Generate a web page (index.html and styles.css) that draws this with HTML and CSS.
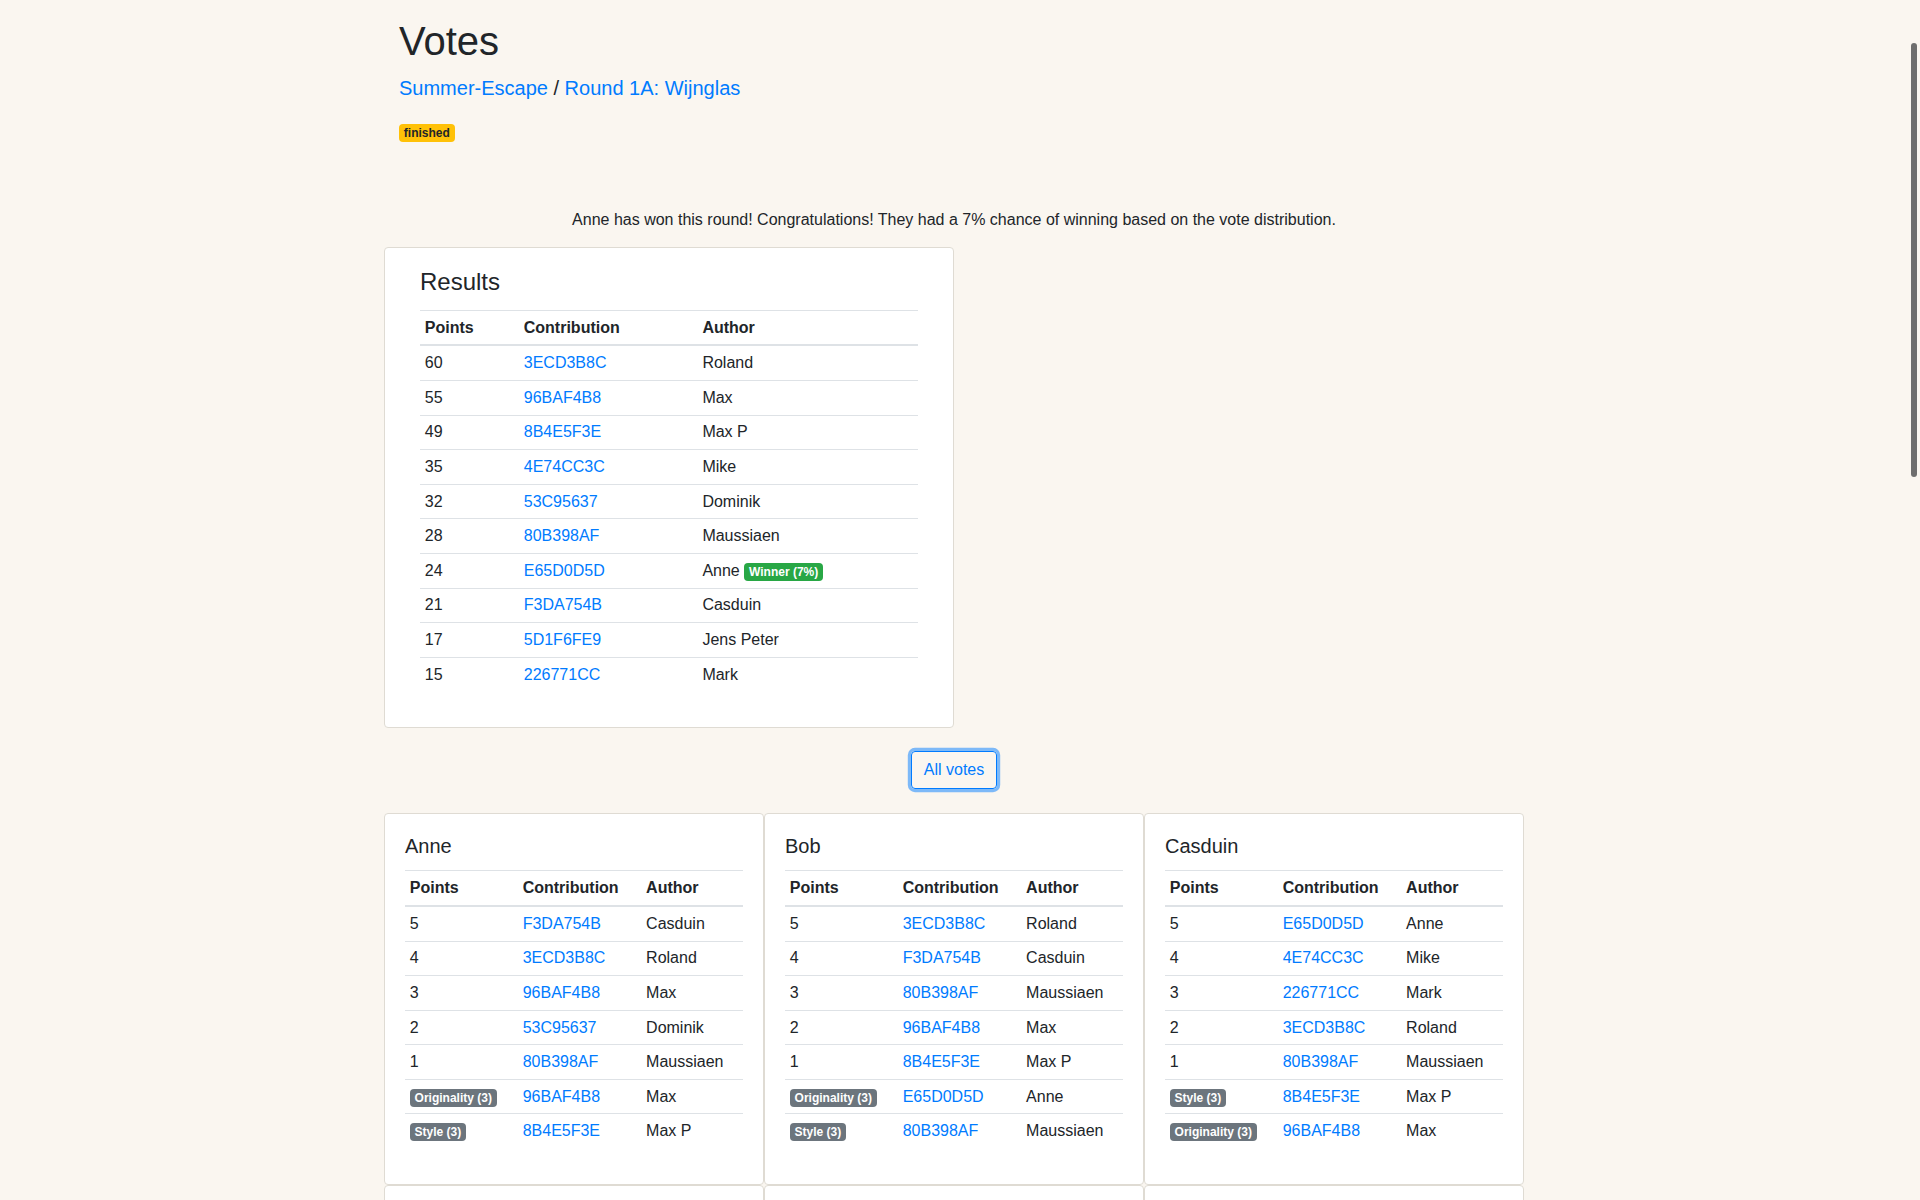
FILE: index.html
```html
<!DOCTYPE html>
<html lang="en">
<head>
<meta charset="utf-8">
<title>Votes</title>
<link rel="stylesheet" href="styles.css">
</head>
<body>
<div class="scroll-thumb" aria-hidden="true"></div>
<div class="container">
  <header class="page-header">
    <h1 class="title">Votes</h1>
    <div class="crumbs"><a href="#">Summer-Escape</a> / <a href="#">Round 1A: Wijnglas</a></div>
    <div class="status"><span class="badge badge-warning">finished</span></div>
  </header>

  <p class="message">Anne has won this round! Congratulations! They had a 7% chance of winning based on the vote distribution.</p>

  <section class="card results">
    <div class="results-body">
      <h4 class="card-title-lg">Results</h4>
      <table class="table">
        <thead><tr><th>Points</th><th>Contribution</th><th>Author</th></tr></thead>
        <tbody>
          <tr><td>60</td><td><a href="#">3ECD3B8C</a></td><td>Roland</td></tr>
          <tr><td>55</td><td><a href="#">96BAF4B8</a></td><td>Max</td></tr>
          <tr><td>49</td><td><a href="#">8B4E5F3E</a></td><td>Max P</td></tr>
          <tr><td>35</td><td><a href="#">4E74CC3C</a></td><td>Mike</td></tr>
          <tr><td>32</td><td><a href="#">53C95637</a></td><td>Dominik</td></tr>
          <tr><td>28</td><td><a href="#">80B398AF</a></td><td>Maussiaen</td></tr>
          <tr><td>24</td><td><a href="#">E65D0D5D</a></td><td>Anne <span class="badge badge-success">Winner (7%)</span></td></tr>
          <tr><td>21</td><td><a href="#">F3DA754B</a></td><td>Casduin</td></tr>
          <tr><td>17</td><td><a href="#">5D1F6FE9</a></td><td>Jens Peter</td></tr>
          <tr><td>15</td><td><a href="#">226771CC</a></td><td>Mark</td></tr>
        </tbody>
      </table>
    </div>
  </section>

  <div class="actions"><button class="btn btn-outline" type="button">All votes</button></div>

  <div class="votes">
    <section class="card vote">
      <h5 class="card-title">Anne</h5>
      <table class="table">
        <thead><tr><th>Points</th><th>Contribution</th><th>Author</th></tr></thead>
        <tbody>
          <tr><td>5</td><td><a href="#">F3DA754B</a></td><td>Casduin</td></tr>
          <tr><td>4</td><td><a href="#">3ECD3B8C</a></td><td>Roland</td></tr>
          <tr><td>3</td><td><a href="#">96BAF4B8</a></td><td>Max</td></tr>
          <tr><td>2</td><td><a href="#">53C95637</a></td><td>Dominik</td></tr>
          <tr><td>1</td><td><a href="#">80B398AF</a></td><td>Maussiaen</td></tr>
          <tr><td><span class="badge badge-secondary">Originality (3)</span></td><td><a href="#">96BAF4B8</a></td><td>Max</td></tr>
          <tr><td><span class="badge badge-secondary">Style (3)</span></td><td><a href="#">8B4E5F3E</a></td><td>Max P</td></tr>
        </tbody>
      </table>
    </section>
    <section class="card vote">
      <h5 class="card-title">Bob</h5>
      <table class="table">
        <thead><tr><th>Points</th><th>Contribution</th><th>Author</th></tr></thead>
        <tbody>
          <tr><td>5</td><td><a href="#">3ECD3B8C</a></td><td>Roland</td></tr>
          <tr><td>4</td><td><a href="#">F3DA754B</a></td><td>Casduin</td></tr>
          <tr><td>3</td><td><a href="#">80B398AF</a></td><td>Maussiaen</td></tr>
          <tr><td>2</td><td><a href="#">96BAF4B8</a></td><td>Max</td></tr>
          <tr><td>1</td><td><a href="#">8B4E5F3E</a></td><td>Max P</td></tr>
          <tr><td><span class="badge badge-secondary">Originality (3)</span></td><td><a href="#">E65D0D5D</a></td><td>Anne</td></tr>
          <tr><td><span class="badge badge-secondary">Style (3)</span></td><td><a href="#">80B398AF</a></td><td>Maussiaen</td></tr>
        </tbody>
      </table>
    </section>
    <section class="card vote">
      <h5 class="card-title">Casduin</h5>
      <table class="table">
        <thead><tr><th>Points</th><th>Contribution</th><th>Author</th></tr></thead>
        <tbody>
          <tr><td>5</td><td><a href="#">E65D0D5D</a></td><td>Anne</td></tr>
          <tr><td>4</td><td><a href="#">4E74CC3C</a></td><td>Mike</td></tr>
          <tr><td>3</td><td><a href="#">226771CC</a></td><td>Mark</td></tr>
          <tr><td>2</td><td><a href="#">3ECD3B8C</a></td><td>Roland</td></tr>
          <tr><td>1</td><td><a href="#">80B398AF</a></td><td>Maussiaen</td></tr>
          <tr><td><span class="badge badge-secondary">Style (3)</span></td><td><a href="#">8B4E5F3E</a></td><td>Max P</td></tr>
          <tr><td><span class="badge badge-secondary">Originality (3)</span></td><td><a href="#">96BAF4B8</a></td><td>Max</td></tr>
        </tbody>
      </table>
    </section>
    <section class="card vote">
      <h5 class="card-title">Dominik</h5>
      <table class="table">
        <thead><tr><th>Points</th><th>Contribution</th><th>Author</th></tr></thead>
        <tbody>
          <tr><td>5</td><td><a href="#">96BAF4B8</a></td><td>Max</td></tr>
          <tr><td>4</td><td><a href="#">3ECD3B8C</a></td><td>Roland</td></tr>
          <tr><td>3</td><td><a href="#">8B4E5F3E</a></td><td>Max P</td></tr>
          <tr><td>2</td><td><a href="#">4E74CC3C</a></td><td>Mike</td></tr>
          <tr><td>1</td><td><a href="#">5D1F6FE9</a></td><td>Jens Peter</td></tr>
          <tr><td><span class="badge badge-secondary">Originality (3)</span></td><td><a href="#">3ECD3B8C</a></td><td>Roland</td></tr>
          <tr><td><span class="badge badge-secondary">Style (3)</span></td><td><a href="#">96BAF4B8</a></td><td>Max</td></tr>
        </tbody>
      </table>
    </section>
    <section class="card vote">
      <h5 class="card-title">Jens Peter</h5>
      <table class="table">
        <thead><tr><th>Points</th><th>Contribution</th><th>Author</th></tr></thead>
        <tbody>
          <tr><td>5</td><td><a href="#">8B4E5F3E</a></td><td>Max P</td></tr>
          <tr><td>4</td><td><a href="#">96BAF4B8</a></td><td>Max</td></tr>
          <tr><td>3</td><td><a href="#">3ECD3B8C</a></td><td>Roland</td></tr>
          <tr><td>2</td><td><a href="#">53C95637</a></td><td>Dominik</td></tr>
          <tr><td>1</td><td><a href="#">E65D0D5D</a></td><td>Anne</td></tr>
          <tr><td><span class="badge badge-secondary">Style (3)</span></td><td><a href="#">4E74CC3C</a></td><td>Mike</td></tr>
          <tr><td><span class="badge badge-secondary">Originality (3)</span></td><td><a href="#">8B4E5F3E</a></td><td>Max P</td></tr>
        </tbody>
      </table>
    </section>
    <section class="card vote">
      <h5 class="card-title">Mark</h5>
      <table class="table">
        <thead><tr><th>Points</th><th>Contribution</th><th>Author</th></tr></thead>
        <tbody>
          <tr><td>5</td><td><a href="#">3ECD3B8C</a></td><td>Roland</td></tr>
          <tr><td>4</td><td><a href="#">8B4E5F3E</a></td><td>Max P</td></tr>
          <tr><td>3</td><td><a href="#">4E74CC3C</a></td><td>Mike</td></tr>
          <tr><td>2</td><td><a href="#">96BAF4B8</a></td><td>Max</td></tr>
          <tr><td>1</td><td><a href="#">F3DA754B</a></td><td>Casduin</td></tr>
          <tr><td><span class="badge badge-secondary">Originality (3)</span></td><td><a href="#">53C95637</a></td><td>Dominik</td></tr>
          <tr><td><span class="badge badge-secondary">Style (3)</span></td><td><a href="#">3ECD3B8C</a></td><td>Roland</td></tr>
        </tbody>
      </table>
    </section>
    <section class="card vote">
      <h5 class="card-title">Maussiaen</h5>
      <table class="table">
        <thead><tr><th>Points</th><th>Contribution</th><th>Author</th></tr></thead>
        <tbody>
          <tr><td>5</td><td><a href="#">96BAF4B8</a></td><td>Max</td></tr>
          <tr><td>4</td><td><a href="#">8B4E5F3E</a></td><td>Max P</td></tr>
          <tr><td>3</td><td><a href="#">3ECD3B8C</a></td><td>Roland</td></tr>
          <tr><td>2</td><td><a href="#">E65D0D5D</a></td><td>Anne</td></tr>
          <tr><td>1</td><td><a href="#">226771CC</a></td><td>Mark</td></tr>
          <tr><td><span class="badge badge-secondary">Originality (3)</span></td><td><a href="#">4E74CC3C</a></td><td>Mike</td></tr>
          <tr><td><span class="badge badge-secondary">Style (3)</span></td><td><a href="#">53C95637</a></td><td>Dominik</td></tr>
        </tbody>
      </table>
    </section>
    <section class="card vote">
      <h5 class="card-title">Max</h5>
      <table class="table">
        <thead><tr><th>Points</th><th>Contribution</th><th>Author</th></tr></thead>
        <tbody>
          <tr><td>5</td><td><a href="#">3ECD3B8C</a></td><td>Roland</td></tr>
          <tr><td>4</td><td><a href="#">4E74CC3C</a></td><td>Mike</td></tr>
          <tr><td>3</td><td><a href="#">53C95637</a></td><td>Dominik</td></tr>
          <tr><td>2</td><td><a href="#">8B4E5F3E</a></td><td>Max P</td></tr>
          <tr><td>1</td><td><a href="#">5D1F6FE9</a></td><td>Jens Peter</td></tr>
          <tr><td><span class="badge badge-secondary">Style (3)</span></td><td><a href="#">3ECD3B8C</a></td><td>Roland</td></tr>
          <tr><td><span class="badge badge-secondary">Originality (3)</span></td><td><a href="#">F3DA754B</a></td><td>Casduin</td></tr>
        </tbody>
      </table>
    </section>
    <section class="card vote">
      <h5 class="card-title">Max P</h5>
      <table class="table">
        <thead><tr><th>Points</th><th>Contribution</th><th>Author</th></tr></thead>
        <tbody>
          <tr><td>5</td><td><a href="#">96BAF4B8</a></td><td>Max</td></tr>
          <tr><td>4</td><td><a href="#">3ECD3B8C</a></td><td>Roland</td></tr>
          <tr><td>3</td><td><a href="#">80B398AF</a></td><td>Maussiaen</td></tr>
          <tr><td>2</td><td><a href="#">4E74CC3C</a></td><td>Mike</td></tr>
          <tr><td>1</td><td><a href="#">53C95637</a></td><td>Dominik</td></tr>
          <tr><td><span class="badge badge-secondary">Originality (3)</span></td><td><a href="#">96BAF4B8</a></td><td>Max</td></tr>
          <tr><td><span class="badge badge-secondary">Style (3)</span></td><td><a href="#">4E74CC3C</a></td><td>Mike</td></tr>
        </tbody>
      </table>
    </section>
    <section class="card vote">
      <h5 class="card-title">Mike</h5>
      <table class="table">
        <thead><tr><th>Points</th><th>Contribution</th><th>Author</th></tr></thead>
        <tbody>
          <tr><td>5</td><td><a href="#">8B4E5F3E</a></td><td>Max P</td></tr>
          <tr><td>4</td><td><a href="#">96BAF4B8</a></td><td>Max</td></tr>
          <tr><td>3</td><td><a href="#">3ECD3B8C</a></td><td>Roland</td></tr>
          <tr><td>2</td><td><a href="#">80B398AF</a></td><td>Maussiaen</td></tr>
          <tr><td>1</td><td><a href="#">53C95637</a></td><td>Dominik</td></tr>
          <tr><td><span class="badge badge-secondary">Style (3)</span></td><td><a href="#">8B4E5F3E</a></td><td>Max P</td></tr>
          <tr><td><span class="badge badge-secondary">Originality (3)</span></td><td><a href="#">E65D0D5D</a></td><td>Anne</td></tr>
        </tbody>
      </table>
    </section>
    <section class="card vote">
      <h5 class="card-title">Roland</h5>
      <table class="table">
        <thead><tr><th>Points</th><th>Contribution</th><th>Author</th></tr></thead>
        <tbody>
          <tr><td>5</td><td><a href="#">96BAF4B8</a></td><td>Max</td></tr>
          <tr><td>4</td><td><a href="#">8B4E5F3E</a></td><td>Max P</td></tr>
          <tr><td>3</td><td><a href="#">4E74CC3C</a></td><td>Mike</td></tr>
          <tr><td>2</td><td><a href="#">226771CC</a></td><td>Mark</td></tr>
          <tr><td>1</td><td><a href="#">F3DA754B</a></td><td>Casduin</td></tr>
          <tr><td><span class="badge badge-secondary">Originality (3)</span></td><td><a href="#">5D1F6FE9</a></td><td>Jens Peter</td></tr>
          <tr><td><span class="badge badge-secondary">Style (3)</span></td><td><a href="#">96BAF4B8</a></td><td>Max</td></tr>
        </tbody>
      </table>
    </section>
  </div>
</div>
</body>
</html>
```
FILE: styles.css
```css
body {
  margin: 0;
  padding-right: 12px;
  background: #faf6f0;
  color: #212529;
  font-family: "Liberation Sans", Arial, sans-serif;
  font-size: 16px;
  line-height: 1.5;
}
.scroll-thumb {
  position: fixed;
  top: 43px;
  right: 3px;
  width: 6px;
  height: 434px;
  border-radius: 3px;
  background: #6e6e6e;
}
a {
  color: #007bff;
  text-decoration: none;
}
.container {
  max-width: 1140px;
  margin: 0 auto;
  padding-bottom: 60px;
}
.page-header {
  padding: 17px 15px 0;
}
.title {
  margin: 0 0 11px;
  font-size: 40px;
  font-weight: 500;
  line-height: 1.2;
}
.crumbs {
  font-size: 20px;
  line-height: 1.2;
  margin-bottom: 24px;
}
.status {
  line-height: 1;
}
.badge {
  display: inline-block;
  padding: 3px 4.8px;
  font-size: 12px;
  font-weight: 700;
  line-height: 1;
  white-space: nowrap;
  vertical-align: baseline;
  border-radius: 4px;
}
.badge-warning {
  background: #ffc107;
  color: #212529;
}
.badge-success {
  background: #28a745;
  color: #fff;
}
.badge-secondary {
  background: #6c757d;
  color: #fff;
}
.message {
  text-align: center;
  margin: 66px 0 15px;
}
.card {
  background: #fff;
  border: 1px solid #dfdbd3;
  border-radius: 4px;
}
.results {
  width: 570px;
  box-sizing: border-box;
}
.results-body {
  padding: 20px 35px;
}
.card-title-lg {
  margin: 0 0 13px;
  font-size: 24px;
  font-weight: 500;
  line-height: 1.2;
}
.table {
  width: 100%;
  border-collapse: collapse;
  margin-bottom: 16px;
}
.table th,
.table td {
  padding: 4.8px;
  text-align: left;
  vertical-align: top;
  border-top: 1px solid #dee2e6;
}
.table th {
  font-weight: 700;
}
.table thead th {
  vertical-align: bottom;
  border-bottom: 2px solid #dee2e6;
}
.actions {
  text-align: center;
  padding: 23px 0 24px;
}
.btn {
  display: inline-block;
  font-family: inherit;
  font-size: 16px;
  line-height: 1.5;
  padding: 6px 12px;
  border-radius: 4px;
  background: transparent;
  color: #007bff;
  border: 1px solid #007bff;
  box-shadow: 0 0 0 3.2px rgba(0, 123, 255, 0.5);
  cursor: pointer;
}
.votes {
  display: grid;
  grid-template-columns: repeat(3, 1fr);
}
.vote {
  padding: 20px;
}
.card-title {
  margin: 0 0 12px;
  font-size: 20px;
  font-weight: 500;
  line-height: 1.2;
}
```
